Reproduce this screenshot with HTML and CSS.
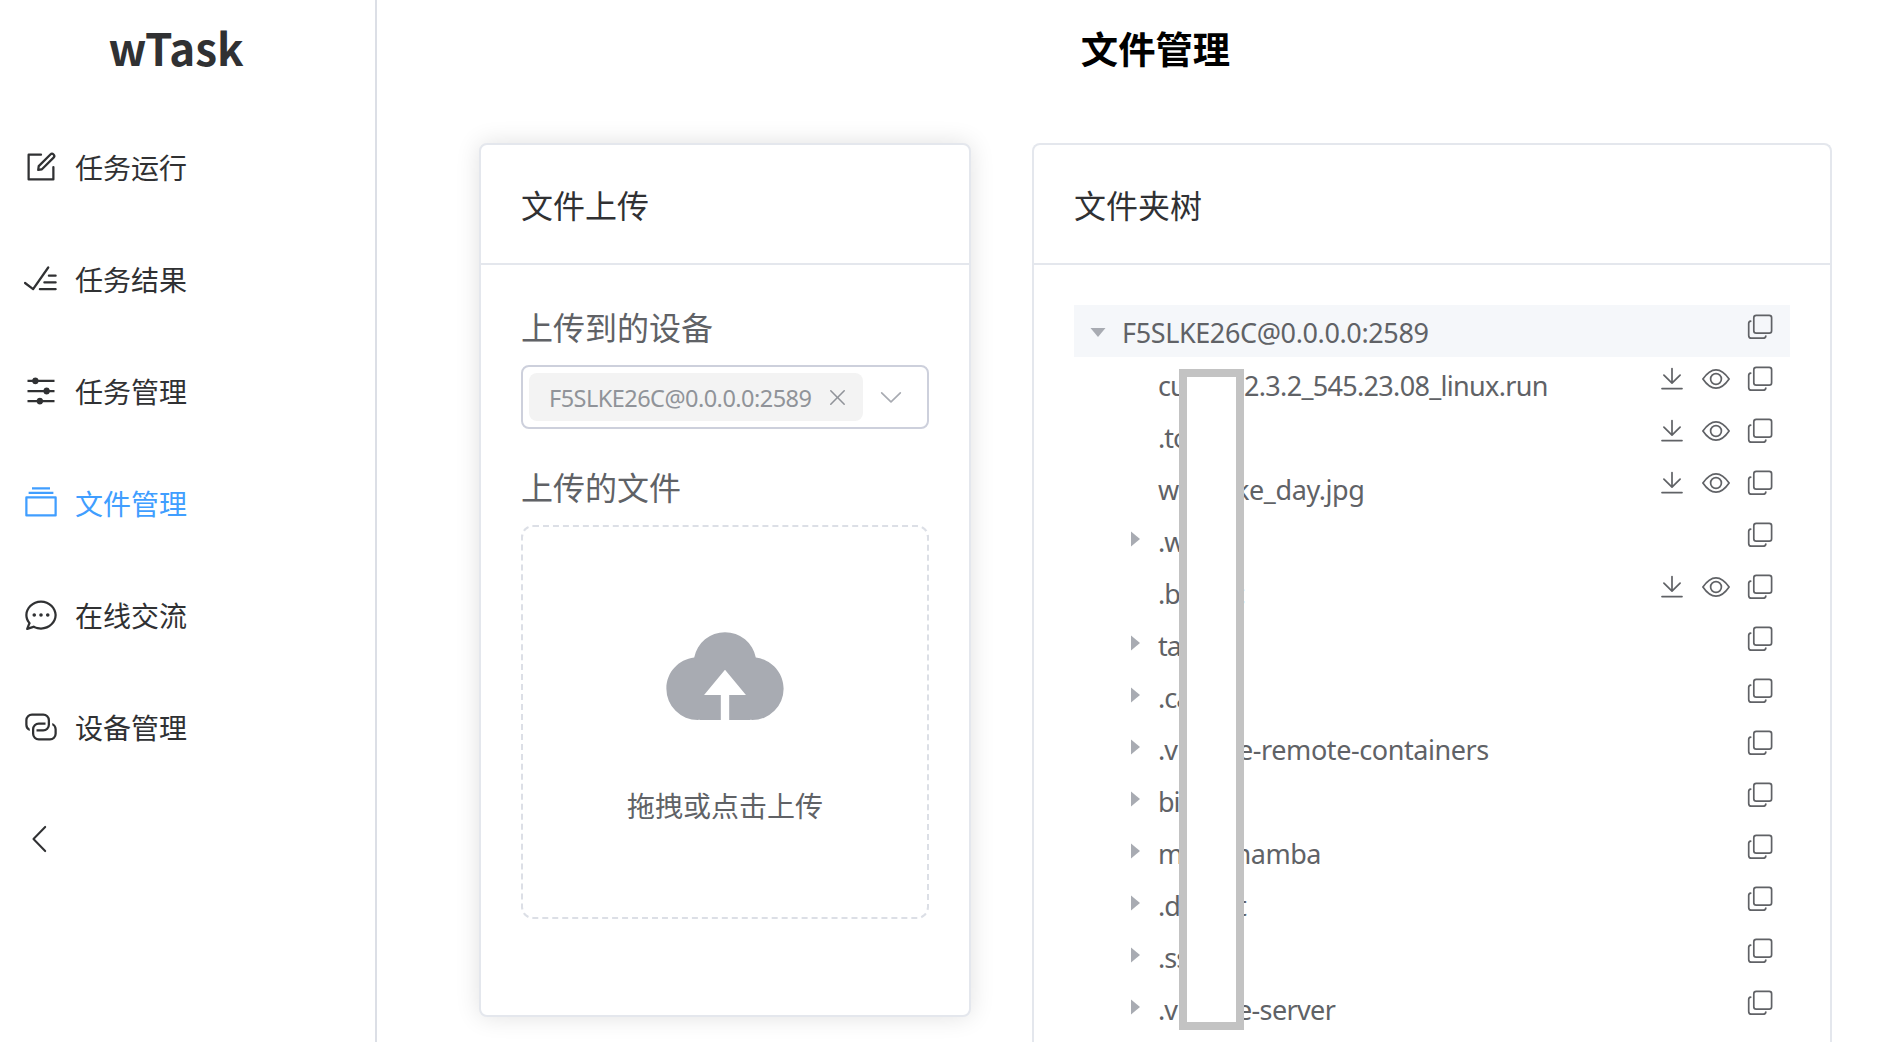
FILE: index.html
```html
<!DOCTYPE html>
<html lang="zh-CN">
<head>
<meta charset="utf-8">
<title>wTask</title>
<link rel="stylesheet" href="styles.css">
</head>
<body>
<svg class="sprite" width="0" height="0">
  <symbol id="copy" viewBox="0 0 28 28"><rect x="7.800" y="2.4" width="17.8" height="17.8" rx="2.4"/><path d="M4.700 8.2c-1.3.2-2 1-2 2.300V22.400a2.800 2.800 0 0 0 2.800 2.800h11.700c1.300 0 2.300-.7 2.600-2"/></symbol>
  <symbol id="eye" viewBox="0 0 28 28"><path d="M.9 14C5.500 7.300 9.700 4.800 14 4.800S22.500 7.300 27.100 14C22.500 20.700 18.300 23.200 14 23.200S5.500 20.700.9 14z"/><circle cx="14" cy="14" r="5.400"/></symbol>
  <symbol id="download" viewBox="0 0 28 28"><path d="M14 3.600V17.600M5.900 10.200l8.100 8 8.100-8M4 23.600h20"/></symbol>
  <symbol id="caret" viewBox="0 0 1024 1024"><path d="M384 192v640l384-320.064z"/></symbol>
</svg>
<div class="app">
  <aside class="sidebar">
    <div class="logo">wTask</div>
    <nav class="menu">
      <a class="item"><svg class="icon" viewBox="0 0 1024 1024"><path d="M832 512a32 32 0 1 1 64 0v352a32 32 0 0 1-32 32H160a32 32 0 0 1-32-32V160a32 32 0 0 1 32-32h352a32 32 0 0 1 0 64H192v640h640V512z"/><path d="m469.952 554.24 52.8-7.552L847.104 222.4a32 32 0 1 0-45.248-45.248L477.44 501.44l-7.552 52.8zm422.4-422.4a96 96 0 0 1 0 135.808l-331.84 331.84a32 32 0 0 1-18.112 9.088L436.8 623.68a32 32 0 0 1-36.224-36.224l15.104-105.6a32 32 0 0 1 9.024-18.112l331.904-331.84a96 96 0 0 1 135.744 0z"/></svg><span>任务运行</span></a>
      <a class="item"><svg class="icon" viewBox="0 0 1024 1024"><path d="M280.768 753.728 691.456 167.04a32 32 0 1 1 52.416 36.672L314.24 817.472a32 32 0 0 1-45.44 7.296l-230.4-172.8a32 32 0 0 1 38.4-51.2l203.968 152.96zM736 448a32 32 0 1 1 0-64h192a32 32 0 1 1 0 64H736zM608 640a32 32 0 0 1 0-64h319.936a32 32 0 1 1 0 64H608zM480 832a32 32 0 1 1 0-64h447.936a32 32 0 1 1 0 64H480z"/></svg><span>任务结果</span></a>
      <a class="item"><svg class="icon" viewBox="0 0 1024 1024"><path d="M389.44 768a96.064 96.064 0 0 1 181.12 0H896v64H570.56a96.064 96.064 0 0 1-181.12 0H128v-64h261.44zm192-288a96.064 96.064 0 0 1 181.12 0H896v64H762.56a96.064 96.064 0 0 1-181.12 0H128v-64h453.44zm-320-288a96.064 96.064 0 0 1 181.12 0H896v64H442.56a96.064 96.064 0 0 1-181.12 0H128v-64h133.44z"/></svg><span>任务管理</span></a>
      <a class="item active"><svg class="icon" viewBox="0 0 1024 1024"><path d="M128 384v448h768V384H128zm-32-64h832a32 32 0 0 1 32 32v512a32 32 0 0 1-32 32H96a32 32 0 0 1-32-32V352a32 32 0 0 1 32-32zm64-128h704v64H160zm96-128h512v64H256z"/></svg><span>文件管理</span></a>
      <a class="item"><svg class="icon" viewBox="0 0 1024 1024"><path d="m174.72 855.68 135.296-45.12 23.68 11.84C388.096 849.536 448.576 864 512 864c211.84 0 384-166.784 384-352S723.84 160 512 160 128 326.784 128 512c0 69.12 24.96 139.264 70.848 199.232l22.08 28.8-46.272 115.584zm-45.248 82.56A32 32 0 0 1 89.6 896l58.368-145.92C94.72 680.32 64 596.864 64 512 64 299.904 256 96 512 96s448 203.904 448 416-192 416-448 416a461.056 461.056 0 0 1-206.912-48.384l-175.616 58.56z"/><path d="M512 563.2a51.2 51.2 0 1 1 0-102.4 51.2 51.2 0 0 1 0 102.4zm192 0a51.2 51.2 0 1 1 0-102.4 51.2 51.2 0 0 1 0 102.4zm-384 0a51.2 51.2 0 1 1 0-102.4 51.2 51.2 0 0 1 0 102.4z"/></svg><span>在线交流</span></a>
      <a class="item"><svg class="icon" viewBox="0 0 1024 1024"><path d="M640 384v64H448a128 128 0 0 0-128 128v128a128 128 0 0 0 128 128h320a128 128 0 0 0 128-128V576a128 128 0 0 0-64-110.848V394.88c74.56 26.368 128 97.472 128 181.056v128a192 192 0 0 1-192 192H448a192 192 0 0 1-192-192V576a192 192 0 0 1 192-192h192z"/><path d="M384 640v-64h192a128 128 0 0 0 128-128V320a128 128 0 0 0-128-128H256a128 128 0 0 0-128 128v128a128 128 0 0 0 64 110.848v70.272A192.064 192.064 0 0 1 64 448V320a192 192 0 0 1 192-192h320a192 192 0 0 1 192 192v128a192 192 0 0 1-192 192H384z"/></svg><span>设备管理</span></a>
      <a class="item"><svg class="icon" viewBox="0 0 1024 1024"><path d="M609.408 149.376 277.76 489.6a32 32 0 0 0 0 44.672l331.648 340.352a29.12 29.12 0 0 0 41.728 0 30.592 30.592 0 0 0 0-42.752L339.264 511.936l311.872-319.872a30.592 30.592 0 0 0 0-42.688 29.12 29.12 0 0 0-41.728 0z"/></svg></a>
    </nav>
  </aside>
  <main class="main">
    <h1 class="title">文件管理</h1>
    <div class="cards">
      <section class="card upload-card">
        <header class="card-header">文件上传</header>
        <div class="card-body">
          <div class="label">上传到的设备</div>
          <div class="select">
            <span class="tag"><span class="tag-text">F5SLKE26C@0.0.0.0:2589</span><svg class="close" viewBox="0 0 1024 1024"><path d="M764.288 214.592 512 466.88 259.712 214.592a31.936 31.936 0 0 0-45.12 45.12L466.752 512 214.528 764.224a31.936 31.936 0 1 0 45.12 45.184L512 557.184l252.288 252.288a31.936 31.936 0 0 0 45.12-45.12L557.12 512.064l252.288-252.352a31.936 31.936 0 1 0-45.12-45.184z"/></svg></span>
            <svg class="arrow" viewBox="0 0 1024 1024"><path d="M831.872 340.864 512 652.672 192.128 340.864a30.592 30.592 0 0 0-42.752 0 29.12 29.12 0 0 0 0 41.6L489.664 714.24a32 32 0 0 0 44.672 0l340.288-331.712a29.12 29.12 0 0 0 0-41.728 30.592 30.592 0 0 0-42.752 0z"/></svg>
          </div>
          <div class="label second">上传的文件</div>
          <div class="dropzone">
            <svg class="cloud" viewBox="0 0 1024 1024"><path d="M544 864V672h128L512 480 352 672h128v192H320v-1.6c-5.376.32-10.496 1.6-16 1.6A240 240 0 0 1 64 624c0-123.136 93.12-223.488 212.608-237.248A239.808 239.808 0 0 1 512 192a239.872 239.872 0 0 1 235.456 194.752c119.488 13.76 212.48 114.112 212.48 237.248a240 240 0 0 1-240 240c-5.376 0-10.56-1.28-16-1.6v1.6H544z"/></svg>
            <div class="hint">拖拽或点击上传</div>
          </div>
        </div>
      </section>
      <section class="card tree-card">
        <header class="card-header">文件夹树</header>
        <div class="card-body tree">
          <div class="row root"><svg class="caret"><use href="#caret"/></svg><span class="name">F5SLKE26C@0.0.0.0:2589</span><span class="actions"><svg><use href="#copy"/></svg></span></div>
          <div class="row"><span class="name"><span class="head">cu</span><span class="tail t-run">2.3.2_545.23.08_linux.run</span></span><span class="actions"><svg><use href="#download"/></svg><svg><use href="#eye"/></svg><svg><use href="#copy"/></svg></span></div>
          <div class="row"><span class="name"><span class="head">.to</span></span><span class="actions"><svg><use href="#download"/></svg><svg><use href="#eye"/></svg><svg><use href="#copy"/></svg></span></div>
          <div class="row"><span class="name"><span class="head">w</span><span class="tail t-jpg">ke_day.jpg</span></span><span class="actions"><svg><use href="#download"/></svg><svg><use href="#eye"/></svg><svg><use href="#copy"/></svg></span></div>
          <div class="row"><svg class="caret"><use href="#caret"/></svg><span class="name"><span class="head">.w</span></span><span class="actions"><svg><use href="#copy"/></svg></span></div>
          <div class="row"><span class="name"><span class="head">.b</span><span class="tail t-rc">c</span></span><span class="actions"><svg><use href="#download"/></svg><svg><use href="#eye"/></svg><svg><use href="#copy"/></svg></span></div>
          <div class="row"><svg class="caret"><use href="#caret"/></svg><span class="name"><span class="head">ta</span></span><span class="actions"><svg><use href="#copy"/></svg></span></div>
          <div class="row"><svg class="caret"><use href="#caret"/></svg><span class="name"><span class="head">.ca</span></span><span class="actions"><svg><use href="#copy"/></svg></span></div>
          <div class="row"><svg class="caret"><use href="#caret"/></svg><span class="name"><span class="head">.v</span><span class="tail t-remote">e-remote-containers</span></span><span class="actions"><svg><use href="#copy"/></svg></span></div>
          <div class="row"><svg class="caret"><use href="#caret"/></svg><span class="name"><span class="head">bi</span></span><span class="actions"><svg><use href="#copy"/></svg></span></div>
          <div class="row"><svg class="caret"><use href="#caret"/></svg><span class="name"><span class="head">m</span><span class="tail t-mamba">mamba</span></span><span class="actions"><svg><use href="#copy"/></svg></span></div>
          <div class="row"><svg class="caret"><use href="#caret"/></svg><span class="name"><span class="head">.d</span><span class="tail t-dot">t</span></span><span class="actions"><svg><use href="#copy"/></svg></span></div>
          <div class="row"><svg class="caret"><use href="#caret"/></svg><span class="name"><span class="head">.ss</span></span><span class="actions"><svg><use href="#copy"/></svg></span></div>
          <div class="row"><svg class="caret"><use href="#caret"/></svg><span class="name"><span class="head">.v</span><span class="tail t-server">e-server</span></span><span class="actions"><svg><use href="#copy"/></svg></span></div>
          <div class="mask"></div>
        </div>
      </section>
    </div>
  </main>
</div>
</body>
</html>
```
FILE: styles.css
```css
* { box-sizing: border-box; }
body {
  margin: 0;
  height: 1042px;
  overflow: hidden;
  background: #fff;
  font-family: "Noto Sans CJK SC", sans-serif;
  color: #303133;
}
svg { display: block; flex: none; fill: currentColor; }
.sprite { position: absolute; }
.app { display: flex; height: 1042px; }

.sidebar { width: 377px; flex: none; border-right: 2px solid #dcdfe6; }
.logo { height: 111px; padding-right: 23px; line-height: 94px; font-size: 44px; font-weight: 700; text-align: center; }
.item { display: flex; align-items: center; height: 112px; padding-left: 23px; gap: 16px; font-size: 28px; }
.item .icon { width: 36px; height: 36px; }
.item span { padding-bottom: 1px; }
.item.active { color: #409eff; }

.main { flex: 1; min-width: 0; padding: 0 48px 0 102px; }
.title { margin: 0; height: 143px; line-height: 96px; font-size: 37.33px; font-weight: 700; color: #000; text-align: center; }
.cards { display: flex; align-items: flex-start; gap: 61px; }
.card { border: 2px solid #e4e7ed; border-radius: 8px; background: #fff; }
.upload-card { width: 492px; height: 874px; box-shadow: 0 0 24px rgba(0, 0, 0, .12); }
.tree-card { flex: 1; min-width: 0; height: 899px; border-bottom: 0; border-radius: 8px 8px 0 0; }
.card-header { height: 120px; padding: 0 40px; border-bottom: 2px solid #e4e7ed; line-height: 118px; font-size: 32px; }
.card-body { padding: 40px; color: #606266; }

.label { height: 60px; line-height: 43px; font-size: 32px; }
.label.second { margin-top: 36px; }
.select { display: flex; align-items: center; height: 64px; padding-left: 6px; border: 2px solid #cdd0dc; border-radius: 8px; }
.tag { display: flex; align-items: center; width: 334px; height: 48px; padding-left: 20px; border-radius: 8px; background: #f3f3f3; color: #909399; }
.tag-text { width: 276px; padding-top: 2px; font: 23.5px/48px "Noto Sans", sans-serif; letter-spacing: -.53px; }
.close { width: 25px; height: 25px; }
.arrow { width: 28px; height: 28px; margin-left: 14px; color: #a8abb2; }
.dropzone { display: flex; flex-direction: column; align-items: center; height: 394px; padding-top: 80px; border: 2px dashed #dcdfe6; border-radius: 12px; }
.cloud { width: 134px; height: 134px; color: #a8abb2; }
.hint { margin-top: 44px; line-height: 40px; font-size: 28px; }

.tree { position: relative; padding: 40px 40px 0; }
.row { display: flex; align-items: center; height: 52px; padding: 0 16px 0 84px; font: 27px/52px "Noto Sans", sans-serif; letter-spacing: -.38px; }
.row.root { padding-left: 48px; background: #f5f7fa; }
.row .name { flex: 1; display: flex; padding-top: 5px; white-space: pre; }
.root .name { padding-top: 4px; }
.caret { width: 24px; height: 24px; margin: 0 12px 0 -36px; color: #a8abb2; }
.root .caret { transform: rotate(90deg); margin: 0 12px 0 -36px; }
.head { width: 80px; letter-spacing: -1px; }
.t-run { padding-left: 6px; letter-spacing: -.68px; }
.t-jpg { margin-left: -3px; letter-spacing: -.4px; }
.t-rc { margin-left: -6px; }
.t-remote { letter-spacing: -.42px; }
.t-mamba { margin-left: -12px; letter-spacing: -.5px; }
.t-dot { margin-left: -1px; }
.t-server { margin-left: -1px; letter-spacing: -.65px; }
.actions { display: flex; gap: 16px; margin-top: -8px; }
.actions svg { width: 28px; height: 28px; fill: none; stroke: #606266; stroke-width: 1.700; stroke-linecap: round; stroke-linejoin: round; }
.mask { position: absolute; left: 145px; top: 104px; width: 65px; height: 661px; border: 8px solid #c3c3c3; background: #fff; }
```
